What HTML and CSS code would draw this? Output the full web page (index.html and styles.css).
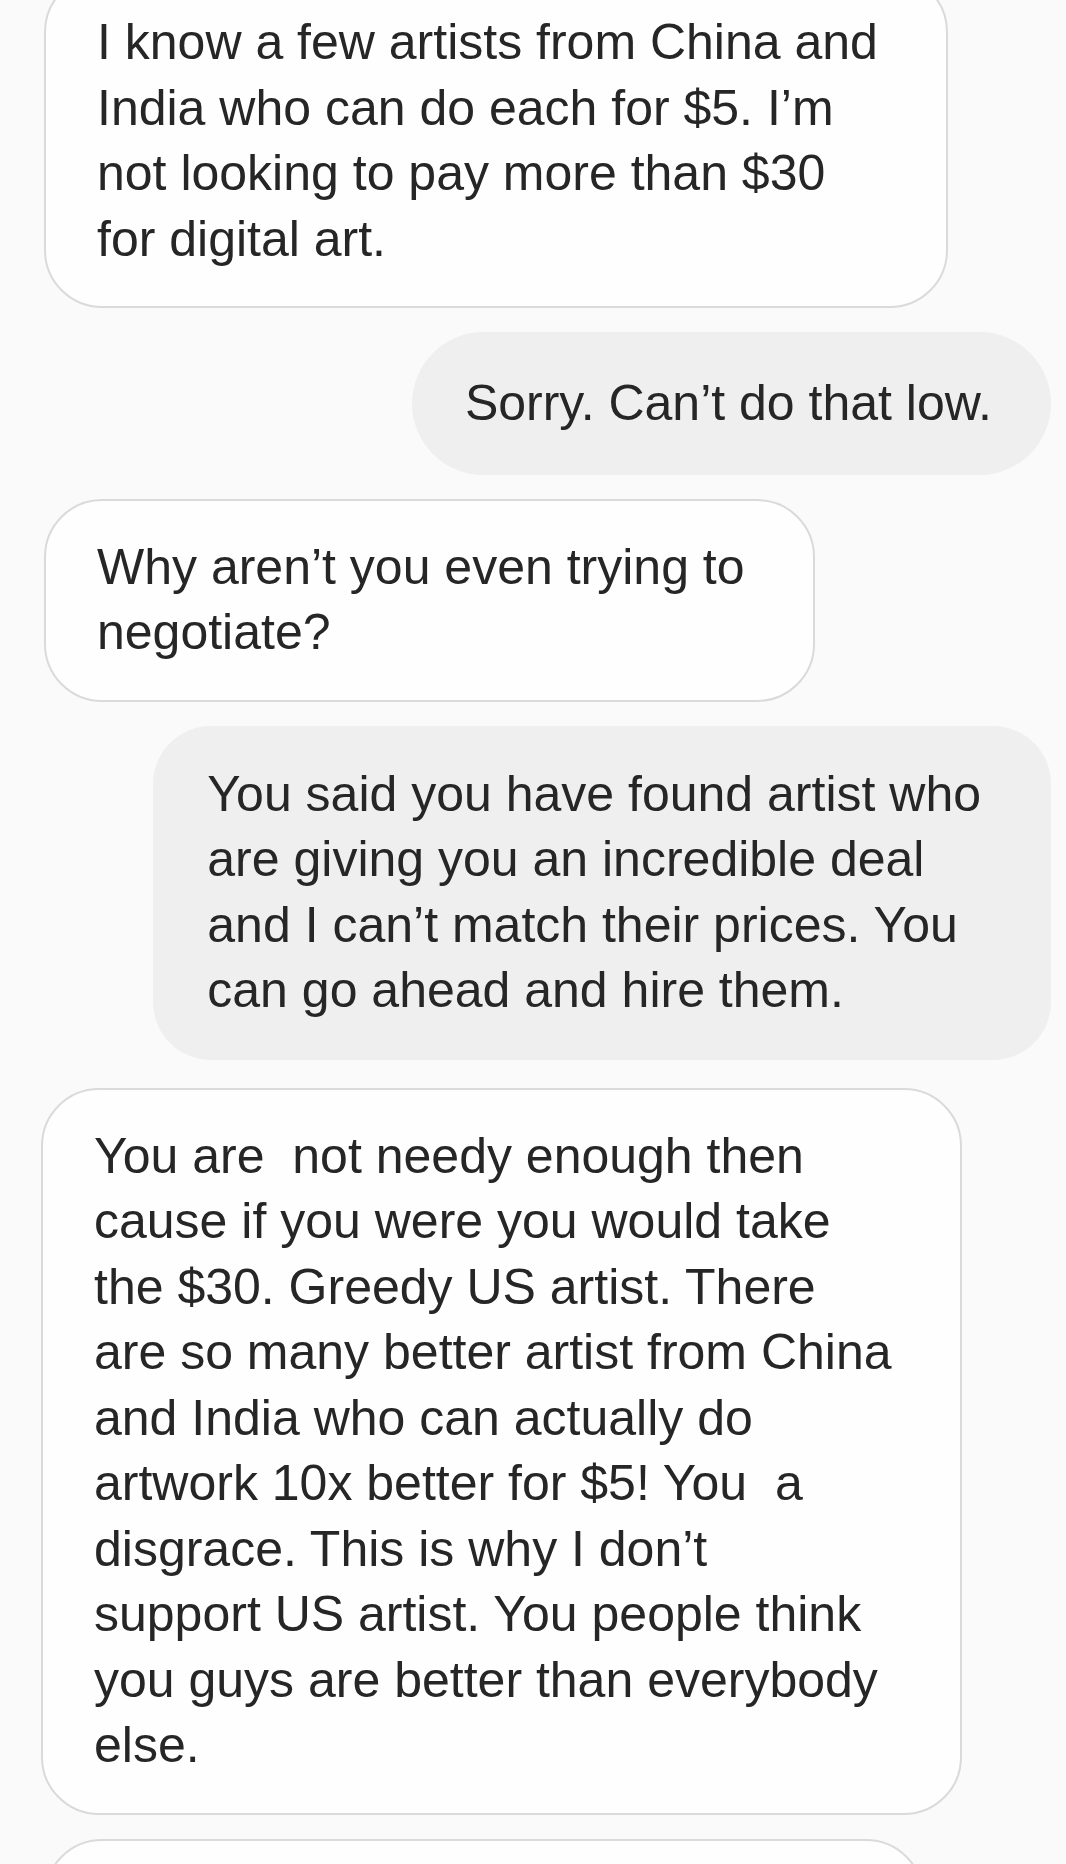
FILE: index.html
```html
<!DOCTYPE html>
<html lang="en">
<head>
<meta charset="utf-8">
<title>Messages</title>
<link rel="stylesheet" href="styles.css">
</head>
<body>
<main class="thread">
  <div class="msg msg-in">
    <p class="msg-text">I know a few artists from China and<br>India who can do each for $5. I’m<br>not looking to pay more than $30<br>for digital art.</p>
  </div>
  <div class="msg msg-out msg-pill">
    <p class="msg-text">Sorry. Can’t do that low.</p>
  </div>
  <div class="msg msg-in">
    <p class="msg-text">Why aren’t you even trying to<br>negotiate?</p>
  </div>
  <div class="msg msg-out">
    <p class="msg-text">You said you have found artist who<br>are giving you an incredible deal<br>and I can’t match their prices. You<br>can go ahead and hire them.</p>
  </div>
  <div class="msg msg-in msg-long">
    <p class="msg-text">You are&nbsp; not needy enough then<br>cause if you were you would take<br>the $30. Greedy US artist. There<br>are so many better artist from China<br>and India who can actually do<br>artwork 10x better for $5! You&nbsp; a<br>disgrace. This is why I don’t<br>support US artist. You people think<br>you guys are better than everybody<br>else.</p>
  </div>
  <div class="msg msg-in msg-next"></div>
</main>
</body>
</html>
```

FILE: styles.css
```css
html, body {
  margin: 0;
  padding: 0;
  background: #fafafa;
}

body {
  height: 1864px;
  overflow: hidden;
  font-family: "Liberation Sans", Arial, sans-serif;
  color: #262626;
}

.thread {
  display: flex;
  flex-direction: column;
  gap: 24px;
  margin-top: -26px;
  padding: 0 15px 0 44px;
}

.msg {
  box-sizing: border-box;
  border-radius: 58px;
}

.msg-text {
  margin: 0;
  font-size: 50px;
  line-height: 65.5px;
  white-space: nowrap;
}

.msg-in {
  align-self: flex-start;
  background: #fefefe;
  border: 2px solid #dadada;
  padding: 34px 68px 34px 51px;
}

.msg-out {
  align-self: flex-end;
  background: #efefef;
  padding: 36px 70px 36px 54px;
}

.msg-pill {
  border-radius: 72px;
  padding: 39px 59px 38px 53px;
}

.msg-long {
  margin-top: 4px;
  margin-left: -3px;
}

.msg-next {
  width: 880px;
  height: 200px;
}
```
